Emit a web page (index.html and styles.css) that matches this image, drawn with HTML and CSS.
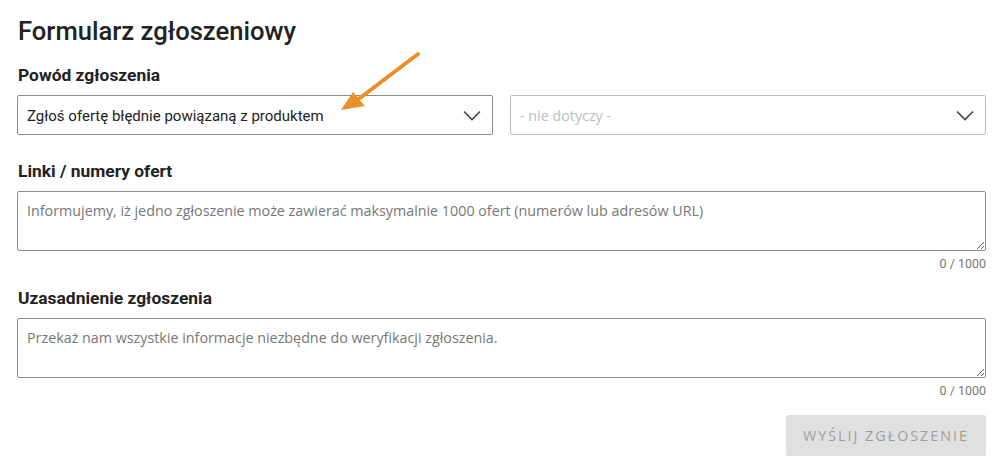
FILE: index.html
```html
<!DOCTYPE html>
<html lang="pl">
<head>
  <meta charset="UTF-8">
  <meta name="viewport" content="width=device-width, initial-scale=1.0">
  <title>Formularz zgłoszeniowy</title>
  <link rel="stylesheet" href="styles.css">
</head>
<body>
  <form class="report-form" action="#" method="post">
    <h1 class="form-title">Formularz zgłoszeniowy</h1>

    <label class="field-label">Powód zgłoszenia</label>
    <div class="select-row">
      <div class="select">
        <span class="select-value">Zgłoś ofertę błędnie powiązaną z produktem</span>
        <svg class="chevron" width="18" height="11" viewBox="0 0 18 11"><path d="M1 1.5 L9 9.5 L17 1.5" fill="none" stroke="#444" stroke-width="1.6"/></svg>
      </div>
      <div class="select select-disabled">
        <span class="select-placeholder">- nie dotyczy -</span>
        <svg class="chevron" width="18" height="11" viewBox="0 0 18 11"><path d="M1 1.5 L9 9.5 L17 1.5" fill="none" stroke="#444" stroke-width="1.6"/></svg>
      </div>
    </div>

    <!-- annotation arrow -->
    <svg class="hint-arrow" width="90" height="70" viewBox="0 0 90 70">
      <line x1="80" y1="4" x2="18" y2="51" stroke="#e8902a" stroke-width="4" stroke-linecap="round"/>
      <polygon points="3,60 15,42 27,56" fill="#e8902a"/>
    </svg>

    <label class="field-label label-spaced" for="offers">Linki / numery ofert</label>
    <textarea id="offers" name="offers" placeholder="Informujemy, iż jedno zgłoszenie może zawierać maksymalnie 1000 ofert (numerów lub adresów URL)"></textarea>
    <div class="counter">0 / 1000</div>

    <label class="field-label label-tight" for="reason">Uzasadnienie zgłoszenia</label>
    <textarea id="reason" name="reason" placeholder="Przekaż nam wszystkie informacje niezbędne do weryfikacji zgłoszenia."></textarea>
    <div class="counter">0 / 1000</div>

    <div class="actions">
      <button type="submit" class="submit-btn" disabled>WYŚLIJ ZGŁOSZENIE</button>
    </div>
  </form>
</body>
</html>
```

FILE: styles.css
```css
body {
  margin: 0;
  background: #fff;
  font-family: Roboto, "Liberation Sans", sans-serif;
  color: #222;
}

.report-form {
  position: relative;
  width: 969px;
  padding: 14px 0 0 17px;
}

.form-title {
  margin: 0;
  font-size: 25.6px;
  font-weight: 500;
  line-height: 34px;
  color: #222;
  padding-left: 1px;
}

.field-label {
  display: block;
  margin-top: 16px;
  margin-bottom: 9px;
  font-size: 17.4px;
  font-weight: 700;
  line-height: 22px;
  color: #222;
  padding-left: 1px;
}

.label-spaced {
  margin-top: 25px;
}

.label-tight {
  margin-top: 14px;
}

.select-row {
  display: flex;
  gap: 17px;
}

.select {
  flex: 1;
  height: 40px;
  box-sizing: border-box;
  border: 1px solid #8c8c8c;
  border-radius: 2px;
  display: flex;
  align-items: center;
  justify-content: space-between;
  padding: 0 11px 0 9px;
}

.select-disabled {
  border-color: #bdbdbd;
}

.select-value {
  font-size: 15px;
  color: #222;
  margin-top: 1px;
}

.select-placeholder {
  font-family: "Open Sans", sans-serif;
  font-size: 14.3px;
  color: #bdbdbd;
}

.chevron {
  display: block;
  margin-top: 1px;
}

.hint-arrow {
  position: absolute;
  left: 338px;
  top: 50px;
}

textarea {
  display: block;
  width: 100%;
  height: 60px;
  box-sizing: border-box;
  margin: 0;
  padding: 8px 9px;
  border: 1px solid #8c8c8c;
  border-radius: 2px;
  font-family: "Open Sans", sans-serif;
  font-size: 14.3px;
  line-height: 22px;
  color: #222;
  resize: vertical;
}

textarea::placeholder {
  color: #777;
}

.counter {
  text-align: right;
  font-size: 12.5px;
  line-height: 18px;
  margin-top: 4px;
  color: #777;
}

.actions {
  display: flex;
  justify-content: flex-end;
  margin-top: 15px;
}

.submit-btn {
  width: 200px;
  height: 41px;
  border: none;
  border-radius: 2px;
  background: #e0e0e0;
  color: #9e9e9e;
  font-family: "Open Sans", sans-serif;
  font-size: 14.3px;
  letter-spacing: 2px;
  cursor: default;
}
```
